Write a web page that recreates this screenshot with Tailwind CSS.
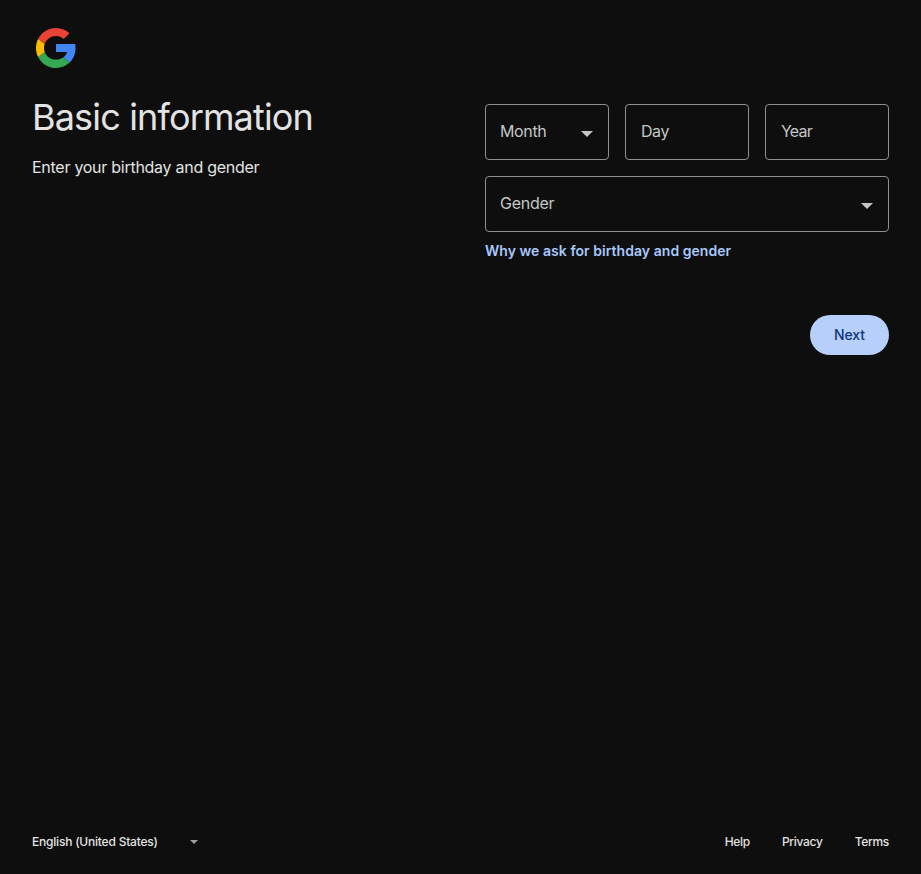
<!DOCTYPE html>
<html lang="en">
<head>
<meta charset="utf-8">
<title>Basic information</title>
<script src="https://cdn.jsdelivr.net/npm/@tailwindcss/browser@4"></script>
</head>
<body class="bg-[#0e0e0e] text-[#e3e3e3] font-['Inter',sans-serif]">
<div class="flex h-[874px] flex-col px-8 pt-6">
  <header>
    <svg class="block size-12" viewBox="0 0 48 48">
      <path fill="#4285F4" d="M43.200 20H24v8h11.100c-.6 2.300-2 4.200-4 5.500l6.500 5.100C41.300 35.200 43.500 30.200 43.500 24.300c0-1.500-.1-2.900-.3-4.300z"/>
      <path fill="#34A853" d="M24 44c5.400 0 10-1.800 13.600-5.400l-6.500-5.100c-1.900 1.300-4.200 2.100-7.100 2.100-5.200 0-9.600-3.200-11.300-7.700l-6.500 5C9.500 39.600 16.200 44 24 44z"/>
      <path fill="#FBBC04" d="M12.700 28.100C12.200 26.800 12 25.400 12 24s.2-2.800.7-4.100l-6.400-5.200C4.800 17.400 4 20.600 4 24s.8 6.500 2.200 9.100z"/>
      <path fill="#EA4335" d="M24 12c3.100 0 5.600 1.100 7.700 3l5.700-5.700C34 6.100 29.300 4 24 4 16.300 4 9.700 8.300 6.300 14.700l6.400 5.200C14.400 15.300 18.800 12 24 12z"/>
    </svg>
  </header>
  <main class="flex flex-1 justify-between pt-6">
    <section>
      <h1 class="-mt-px whitespace-nowrap text-[36px] font-normal leading-[44px] tracking-[-0.84px]">Basic information</h1>
      <p class="mt-4 whitespace-nowrap text-[16px] leading-6 tracking-[-0.27px]">Enter your birthday and gender</p>
    </section>
    <form class="w-[404px] pt-2 text-[#c4c7c5]">
      <div class="grid grid-cols-3 gap-4">
        <div class="flex h-14 items-center justify-between rounded-[4px] border border-[#8e918f] pl-[14px] pr-[15px] pb-[2px] text-[16px]"><span class="tracking-[-0.35px]">Month</span><svg class="relative top-[3px] h-[6px] w-3" viewBox="0 0 12 6"><path fill="#c4c7c5" d="M0 0h12L6 6z"/></svg></div>
        <div class="flex h-14 items-center rounded-[4px] border border-[#8e918f] pl-[15px] pb-[2px] text-[16px]"><span class="tracking-[-0.45px]">Day</span></div>
        <div class="flex h-14 items-center rounded-[4px] border border-[#8e918f] pl-[15px] pb-[2px] text-[16px]"><span class="tracking-[-0.8px]">Year</span></div>
      </div>
      <div class="mt-4 flex h-14 items-center justify-between rounded-[4px] border border-[#8e918f] pl-[14px] pr-[15px] pb-[2px] text-[16px]"><span class="tracking-[-0.25px]">Gender</span><svg class="relative top-[3px] h-[6px] w-3" viewBox="0 0 12 6"><path fill="#c4c7c5" d="M0 0h12L6 6z"/></svg></div>
      <a class="mt-[9px] block whitespace-nowrap text-[14px] font-semibold leading-5 text-[#a8c7fa]"><span class="tracking-[0.04px]">Why we ask for birthday and gender</span></a>
      <div class="mt-[54px] flex justify-end">
        <button type="button" class="h-10 w-[79px] rounded-full bg-[#b7cffb] pb-px text-[14px] font-medium tracking-[-0.1px] text-[#0b367b]">Next</button>
      </div>
    </form>
  </main>
  <footer class="flex h-16 items-center justify-between text-[12px]">
    <div class="flex w-[166px] items-center justify-between font-medium"><span class="whitespace-nowrap tracking-[-0.21px]">English (United States)</span><svg class="h-1 w-2" viewBox="0 0 8 4"><path fill="#9aa0a6" d="M0 0h8L4 4z"/></svg></div>
    <nav class="flex gap-8 font-medium tracking-[-0.3px]"><a>Help</a><a>Privacy</a><a>Terms</a></nav>
  </footer>
</div>
</body>
</html>
